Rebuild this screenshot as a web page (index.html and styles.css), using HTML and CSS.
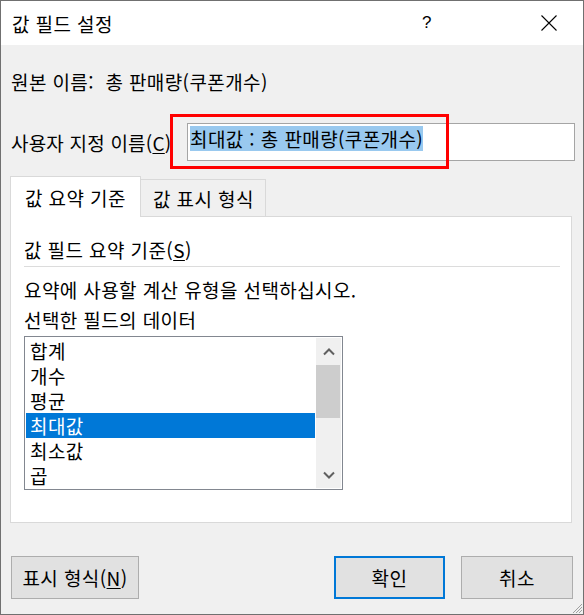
FILE: index.html
```html
<!DOCTYPE html>
<html lang="ko">
<head>
<meta charset="utf-8">
<link rel="stylesheet" href="styles.css">
</head>
<body>
<div class="window">
  <div class="titlebar">
    <div class="title">값 필드 설정</div>
    <div class="help">?</div>
    <div class="close">
      <svg width="16" height="16" viewBox="0 0 16 16"><path d="M0.5 0.5 L15.5 15.5 M15.5 0.5 L0.5 15.5" stroke="#000" stroke-width="1.1" fill="none"/></svg>
    </div>
  </div>
  <div class="content">
    <div class="row source">원본 이름:&nbsp; 총 판매량(쿠폰개수)</div>
    <div class="row custom">
      <div class="label">사용자 지정 이름(<u>C</u>)</div>
      <div class="textbox"><span class="sel">최대값 : 총 판매량(쿠폰개수)</span></div>
      <div class="redbox"></div>
    </div>
    <div class="tabs">
      <div class="tab active">값 요약 기준</div>
      <div class="tab">값 표시 형식</div>
    </div>
    <div class="panel">
      <div class="heading">값 필드 요약 기준(<u>S</u>)</div>
      <div class="sep"></div>
      <div class="line l1">요약에 사용할 계산 유형을 선택하십시오.</div>
      <div class="line l2">선택한 필드의 데이터</div>
      <div class="listbox">
        <div class="items">
          <div class="item">합계</div>
          <div class="item">개수</div>
          <div class="item">평균</div>
          <div class="item selected">최대값</div>
          <div class="item">최소값</div>
          <div class="item">곱</div>
        </div>
        <div class="scrollbar">
          <div class="arrow">
            <svg width="12" height="8" viewBox="0 0 12 8"><path d="M1 6.5 L6 1.5 L11 6.5" stroke="#606060" stroke-width="2" fill="none"/></svg>
          </div>
          <div class="thumb"></div>
          <div class="track"></div>
          <div class="arrow">
            <svg width="12" height="8" viewBox="0 0 12 8"><path d="M1 1.5 L6 6.5 L11 1.5" stroke="#606060" stroke-width="2" fill="none"/></svg>
          </div>
        </div>
      </div>
    </div>
    <div class="buttons">
      <div class="btn fmt">표시 형식(<u>N</u>)</div>
      <div class="spacer"></div>
      <div class="btn ok">확인</div>
      <div class="btn cancel">취소</div>
    </div>
    <svg class="grip" width="12" height="12" viewBox="0 0 12 12">
      <path d="M11 2 L2 11 M11 5 L5 11 M11 8 L8 11" stroke="#a0a0a0" stroke-width="1" fill="none"/>
    </svg>
  </div>
</div>
</body>
</html>
```

FILE: styles.css
```css
* { box-sizing: border-box; }
html, body { margin: 0; padding: 0; background: #f0f0f0; }
body {
  font-family: "Noto Sans CJK KR", "Noto Sans", sans-serif;
  font-size: 19px;
  letter-spacing: 0.4px;
  color: #000;
}
u { text-underline-offset: 2px; }
.window {
  width: 584px;
  height: 615px;
  border: 1px solid #707070;
  display: flex;
  flex-direction: column;
  background: #f0f0f0;
}
.titlebar {
  height: 44px;
  background: #fff;
  display: flex;
  align-items: center;
  flex: none;
}
.title {
  padding-left: 11px;
  line-height: 25px;
  flex: 1;
}
.help {
  font-family: "Liberation Sans", sans-serif;
  font-size: 17px;
  width: 20px;
  text-align: center;
  margin-right: 104px;
}
.close {
  width: 16px;
  height: 16px;
  margin-right: 26px;
  display: flex;
}
.content {
  flex: 1;
  position: relative;
  padding: 0 9px;
  display: flex;
  flex-direction: column;
}
.row.source {
  margin-top: 24px;
  line-height: 25px;
  padding-left: 1px;
}
.row.custom {
  margin-top: 29px;
  display: flex;
  align-items: center;
  position: relative;
}
.label {
  width: 177px;
  padding-left: 1px;
  line-height: 25px;
  white-space: nowrap;
  letter-spacing: 0.2px;
}
.textbox {
  flex: 1;
  height: 38px;
  background: #fff;
  border: 1px solid #a5a5a5;
  padding: 2px 2px;
  line-height: 25px;
  margin-right: -1px;
  white-space: nowrap;
}
.sel {
  background: #99c9ef;
  display: inline-block;
}
.redbox {
  position: absolute;
  left: 160px;
  top: -9px;
  width: 279px;
  height: 55px;
  border: 3px solid #ff0000;
}
.tabs {
  margin-top: 15px;
  height: 41px;
  display: flex;
  align-items: flex-start;
  margin-right: 2px;
  position: relative;
  z-index: 1;
}
.tab {
  line-height: 25px;
  border: 1px solid #d9d9d9;
  border-bottom: none;
  white-space: nowrap;
}
.tab.active {
  width: 131px;
  height: 41px;
  background: #fff;
  padding: 8px 0 0 14px;
}
.tab:not(.active) {
  margin-top: 3px;
  width: 125px;
  height: 37px;
  padding: 6px 0 0 12px;
  border-left: none;
  background: #f0f0f0;
}
.panel {
  margin-top: -1px;
  height: 307px;
  margin-right: 2px;
  background: #fff;
  border: 1px solid #d9d9d9;
  padding: 0 0 0 13px;
  display: flex;
  flex-direction: column;
  align-items: flex-start;
}
.heading {
  margin-top: 20px;
  line-height: 25px;
}
.sep {
  margin-top: 4px;
  height: 1px;
  width: 536px;
  background: #dcdcdc;
}
.line { line-height: 25px; white-space: nowrap; }
.l1 { margin-top: 10px; }
.l2 { margin-top: 5px; }
.listbox {
  margin-top: 4px;
  width: 319px;
  height: 154px;
  border: 1px solid #828790;
  background: #fff;
  display: flex;
  padding: 1px;
}
.items {
  flex: 1;
  display: flex;
  flex-direction: column;
}
.item {
  height: 25px;
  line-height: 25px;
  padding-left: 4px;
}
.item.selected {
  background: #0078d7;
  color: #fff;
  margin-right: 1px;
}
.scrollbar {
  width: 25px;
  background: #f0f0f0;
  display: flex;
  flex-direction: column;
}
.arrow {
  height: 27px;
  display: flex;
  align-items: center;
  justify-content: center;
}
.thumb {
  height: 53px;
  background: #cdcdcd;
  margin-right: 1px;
}
.track { flex: 1; }
.buttons {
  margin-top: 33px;
  display: flex;
  gap: 16px;
  padding-left: 1px;
  margin-right: 1px;
}
.spacer { flex: 1; }
.btn {
  height: 43px;
  background: #e1e1e1;
  border: 1px solid #adadad;
  display: flex;
  align-items: center;
  justify-content: center;
  line-height: 25px;
  white-space: nowrap;
}
.btn.fmt { width: 128px; }
.btn.ok { width: 111px; border: 2px solid #0078d7; }
.btn.cancel { width: 112px; }
.grip {
  position: absolute;
  right: 0;
  bottom: 0;
}
```
